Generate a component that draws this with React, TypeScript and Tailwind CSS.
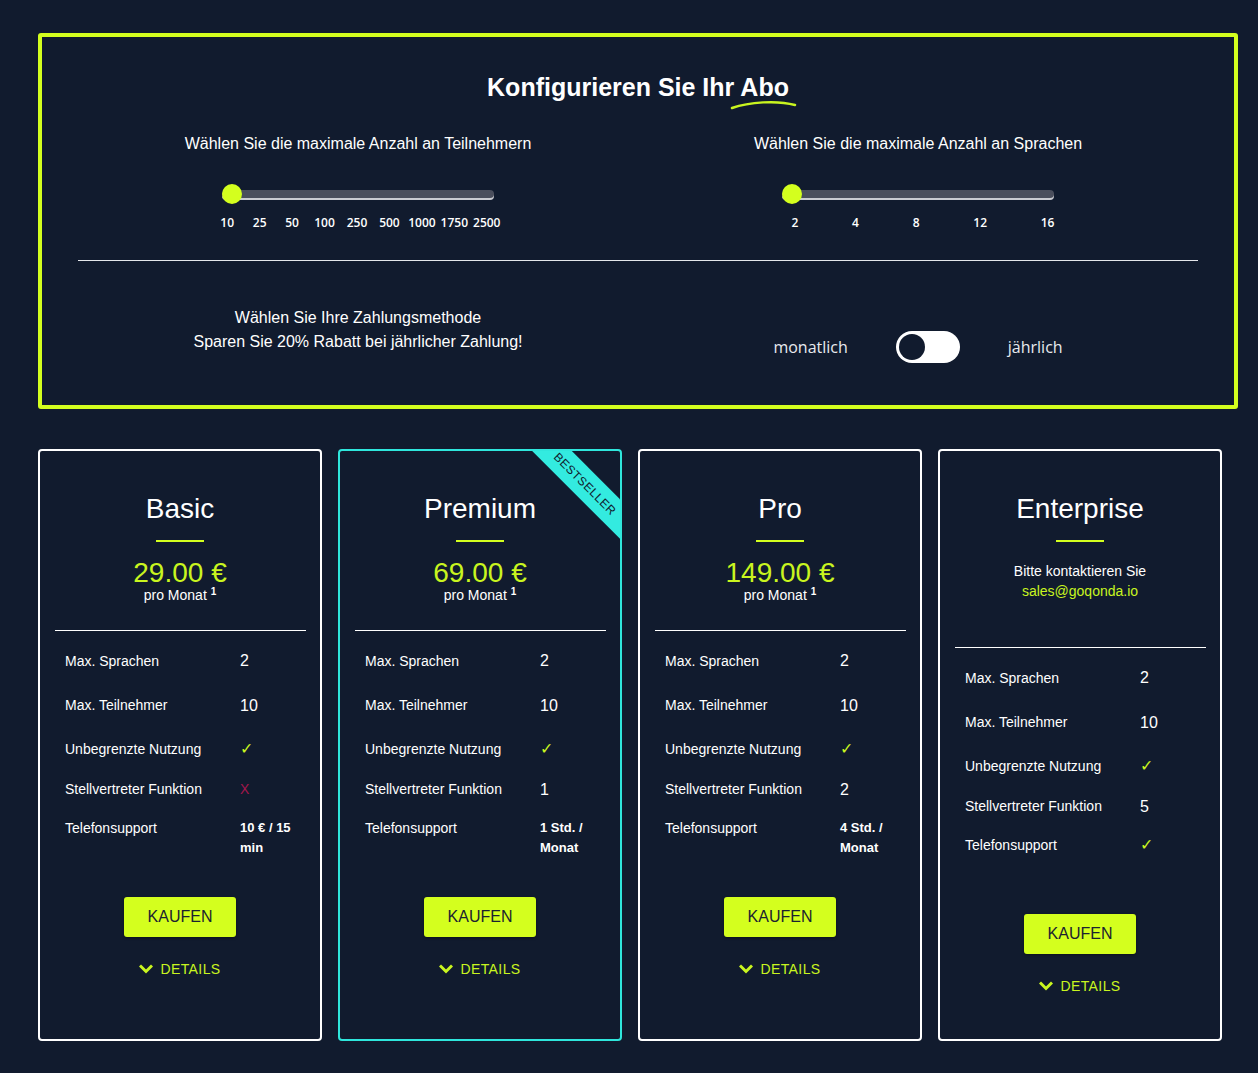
import React from 'react'

const participantSteps = ['10', '25', '50', '100', '250', '500', '1000', '1750', '2500']
const languageSteps = ['2', '4', '8', '12', '16']

type Row = { label: string; value: React.ReactNode }

type Plan = {
	name: string
	price?: string
	rows: Row[]
	highlight?: boolean
}

const Check = () => <span className="text-[16px] text-[#c9f51f]">✓</span>
const Cross = () => <span className="text-[14px] text-[#a3174c]">X</span>
const Num = ({ v }: { v: string }) => <span className="text-[16px]">{v}</span>
const Small = ({ v }: { v: string }) => <span className="block w-[58px] text-[13px] font-bold leading-5">{v}</span>

const plans: Plan[] = [
	{
		name: 'Basic',
		price: '29.00 €',
		rows: [
			{ label: 'Max. Sprachen', value: <Num v="2" /> },
			{ label: 'Max. Teilnehmer', value: <Num v="10" /> },
			{ label: 'Unbegrenzte Nutzung', value: <Check /> },
			{ label: 'Stellvertreter Funktion', value: <Cross /> },
			{ label: 'Telefonsupport', value: <Small v="10 € / 15 min" /> },
		],
	},
	{
		name: 'Premium',
		price: '69.00 €',
		highlight: true,
		rows: [
			{ label: 'Max. Sprachen', value: <Num v="2" /> },
			{ label: 'Max. Teilnehmer', value: <Num v="10" /> },
			{ label: 'Unbegrenzte Nutzung', value: <Check /> },
			{ label: 'Stellvertreter Funktion', value: <Num v="1" /> },
			{ label: 'Telefonsupport', value: <Small v="1 Std. / Monat" /> },
		],
	},
	{
		name: 'Pro',
		price: '149.00 €',
		rows: [
			{ label: 'Max. Sprachen', value: <Num v="2" /> },
			{ label: 'Max. Teilnehmer', value: <Num v="10" /> },
			{ label: 'Unbegrenzte Nutzung', value: <Check /> },
			{ label: 'Stellvertreter Funktion', value: <Num v="2" /> },
			{ label: 'Telefonsupport', value: <Small v="4 Std. / Monat" /> },
		],
	},
	{
		name: 'Enterprise',
		rows: [
			{ label: 'Max. Sprachen', value: <Num v="2" /> },
			{ label: 'Max. Teilnehmer', value: <Num v="10" /> },
			{ label: 'Unbegrenzte Nutzung', value: <Check /> },
			{ label: 'Stellvertreter Funktion', value: <Num v="5" /> },
			{ label: 'Telefonsupport', value: <Check /> },
		],
	},
]

const rowHeights = ['h-[44px]', 'h-[45px]', 'h-[42px]', 'h-[39px]']

function Slider({ steps, even }: { steps: string[]; even?: boolean }) {
	return (
		<div className="flex flex-col items-center">
			<div className="mt-[28px] relative h-5 w-[272px] flex items-center">
				<div className="h-2 w-full rounded-full bg-[#4a4e5c] shadow-[0_2px_0_0_#c9cad0]" />
				<div className="absolute left-0 top-0 h-5 w-5 rounded-full bg-[#d4ff1e]" />
			</div>
			{even ? (
				<div className="mt-[11px] grid grid-cols-9 w-[292px] -ml-[2px] font-['Open_Sans',sans-serif] text-[12px] font-semibold leading-4 text-white">
					{steps.map((s) => (
						<span key={s} className="text-center">{s}</span>
					))}
				</div>
			) : (
				<div className="mt-[11px] ml-[10px] flex justify-between w-[263px] font-['Open_Sans',sans-serif] text-[12px] font-semibold leading-4 text-white">
					{steps.map((s) => (
						<span key={s}>{s}</span>
					))}
				</div>
			)}
		</div>
	)
}

function Card({ plan }: { plan: Plan }) {
	return (
		<div
			className={
				'relative w-[284px] overflow-hidden rounded-[4px] border-2 flex flex-col items-center pt-[42px] pb-[43px] ' +
				(plan.highlight ? 'border-[#2fe6dc]' : 'border-white')
			}>
			{plan.highlight && (
				<div className="absolute left-[165px] top-[19px] h-[28px] w-[160px] rotate-45 bg-[#33ebe0] flex items-center justify-center text-[12px] tracking-[0.5px] text-[#111b2e]">
					BESTSELLER
				</div>
			)}
			<h2 className="text-[28px] leading-8 text-white">{plan.name}</h2>
			<div className="mt-[15px] h-[2px] w-12 bg-[#d4ff1e]" />
			{plan.price ? (
				<>
					<div className="mt-[17px] text-[28px] leading-7 text-[#c9f51f]">{plan.price}</div>
					<div className="text-[14px] leading-4 text-white">
						pro Monat <sup className="text-[10px] font-bold">1</sup>
					</div>
					<div className="mt-[27px] h-px w-[251px] bg-white" />
				</>
			) : (
				<>
					<div className="mt-[19px] text-[14px] leading-5 text-white text-center">
						Bitte kontaktieren Sie
						<br />
						<span className="text-[#c9f51f]">sales@goqonda.io</span>
					</div>
					<div className="mt-[46px] h-px w-[251px] bg-white" />
				</>
			)}
			<div className="mt-[8px] w-full pl-[25px] text-white">
				{plan.rows.map((r, i) =>
					i < 4 ? (
						<div key={r.label} className={'flex items-center ' + rowHeights[i]}>
							<span className="w-[175px] text-[14px]">{r.label}</span>
							{r.value}
						</div>
					) : (
						<div key={r.label} className="flex items-start h-[58px] pt-[9px]">
							<span className="w-[175px] text-[14px] leading-5">{r.label}</span>
							<span className="leading-5">{r.value}</span>
						</div>
					)
				)}
			</div>
			<button className="mt-[30px] h-10 w-[112px] rounded-[3px] bg-[#d4ff1e] text-[16px] text-[#1b2230] shadow-[0_1px_3px_rgba(0,0,0,0.4)]">
				KAUFEN
			</button>
			<div className="mt-[22px] flex items-center gap-[7px] text-[14px] leading-5 tracking-[0.4px] text-[#c9f51f]">
				<svg width="14" height="10" viewBox="0 0 14 10" fill="none">
					<path d="M2 2.5 L7 7.5 L12 2.5" stroke="#c9f51f" strokeWidth="3" strokeLinecap="square" />
				</svg>
				DETAILS
			</div>
		</div>
	)
}

export default function App() {
	return (
		<div className="min-h-screen bg-[#111b2e] pt-[33px] pl-[38px] pb-[33px] font-['Liberation_Sans',Arial,sans-serif]">
			<div className="w-[1200px] rounded-[3px] border-4 border-[#d4ff1e] px-[36px] pt-[36px] pb-[42px]">
				<div className="flex justify-center">
					<h1 className="relative text-[25px] font-bold leading-7 text-white">
						Konfigurieren Sie Ihr Abo
						<svg className="absolute right-[-10px] top-[24px]" width="70" height="14" viewBox="0 0 70 14" fill="none">
							<path d="M3 11 C 20 5, 48 3, 66 8" stroke="#c9f51f" strokeWidth="2.5" strokeLinecap="round" />
						</svg>
					</h1>
				</div>
				<div className="mt-[31px] grid grid-cols-2">
					<div className="flex flex-col items-center">
						<p className="text-[16px] leading-6 text-white">Wählen Sie die maximale Anzahl an Teilnehmern</p>
						<Slider steps={participantSteps} even />
					</div>
					<div className="flex flex-col items-center">
						<p className="text-[16px] leading-6 text-white">Wählen Sie die maximale Anzahl an Sprachen</p>
						<Slider steps={languageSteps} />
					</div>
				</div>
				<div className="mt-[29px] h-px bg-[#e5e7eb]" />
				<div className="mt-[45px] grid grid-cols-2 items-start">
					<div className="text-center text-[16px] leading-6 text-white">
						Wählen Sie Ihre Zahlungsmethode
						<br />
						Sparen Sie 20% Rabatt bei jährlicher Zahlung!
					</div>
					<div className="mt-[25px] flex items-center justify-center gap-[48px] font-['Open_Sans',sans-serif] text-[16px] text-[#e8eaee]">
						<span>monatlich</span>
						<div className="relative h-8 w-16 rounded-full bg-white">
							<div className="absolute left-[3px] top-[3px] h-[26px] w-[26px] rounded-full bg-[#111b2e]" />
						</div>
						<span>jährlich</span>
					</div>
				</div>
			</div>
			<div className="mt-[40px] flex gap-4">
				{plans.map((p) => (
					<Card key={p.name} plan={p} />
				))}
			</div>
		</div>
	)
}
